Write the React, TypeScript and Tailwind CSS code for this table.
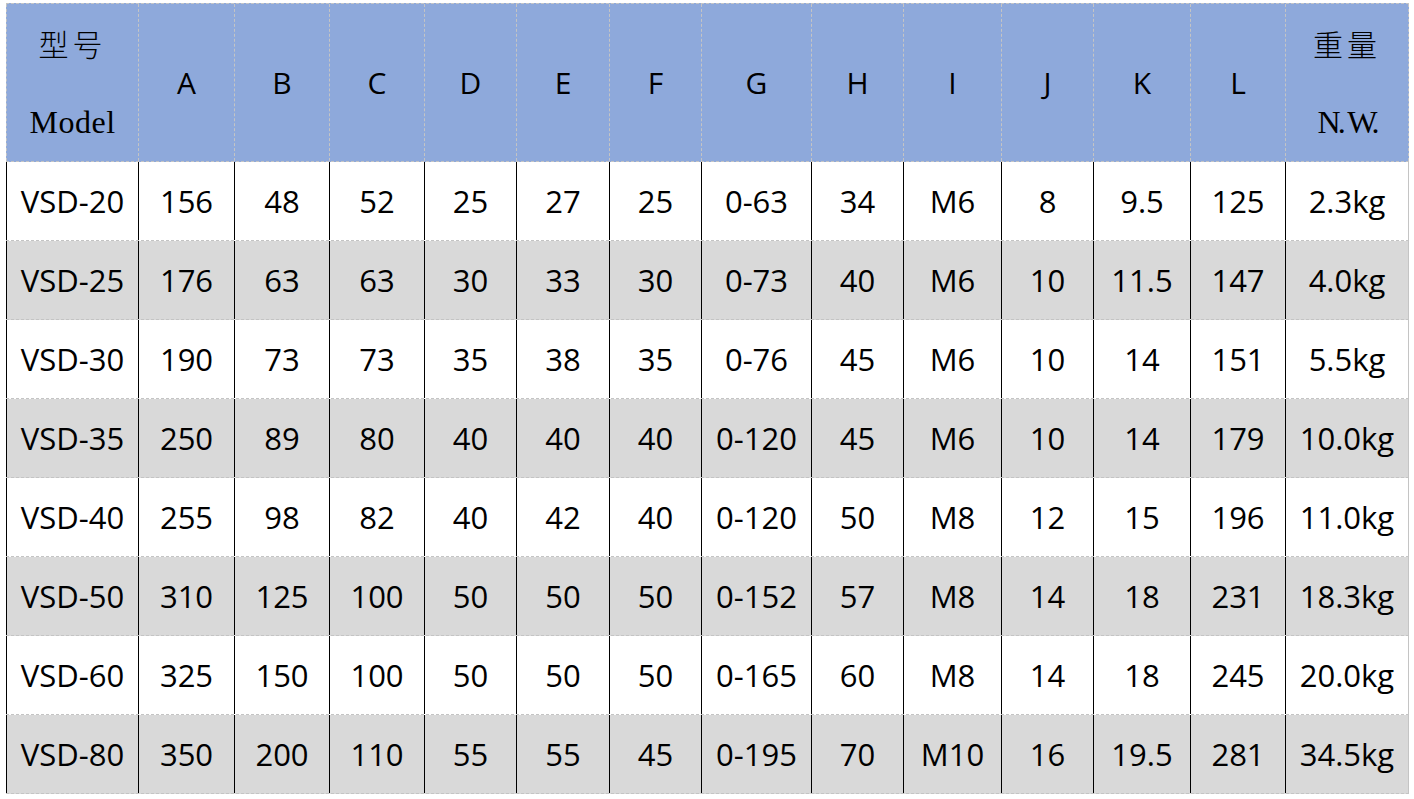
const cols = [
  "A", "B", "C", "D", "E", "F", "G", "H", "I", "J", "K", "L",
];

const rows: string[][] = [
  ["VSD-20", "156", "48", "52", "25", "27", "25", "0-63", "34", "M6", "8", "9.5", "125", "2.3kg"],
  ["VSD-25", "176", "63", "63", "30", "33", "30", "0-73", "40", "M6", "10", "11.5", "147", "4.0kg"],
  ["VSD-30", "190", "73", "73", "35", "38", "35", "0-76", "45", "M6", "10", "14", "151", "5.5kg"],
  ["VSD-35", "250", "89", "80", "40", "40", "40", "0-120", "45", "M6", "10", "14", "179", "10.0kg"],
  ["VSD-40", "255", "98", "82", "40", "42", "40", "0-120", "50", "M8", "12", "15", "196", "11.0kg"],
  ["VSD-50", "310", "125", "100", "50", "50", "50", "0-152", "57", "M8", "14", "18", "231", "18.3kg"],
  ["VSD-60", "325", "150", "100", "50", "50", "50", "0-165", "60", "M8", "14", "18", "245", "20.0kg"],
  ["VSD-80", "350", "200", "110", "55", "55", "45", "0-195", "70", "M10", "16", "19.5", "281", "34.5kg"],
];

const grid =
  "grid w-[1403px] grid-cols-[132px_96px_95px_95px_92px_93px_92px_110px_92px_98px_92px_97px_95px_124px]";

const sans = "font-['Open_Sans',sans-serif]";
const cjk = "font-['Noto_Sans_CJK_SC',serif]";
const serif = "font-['Liberation_Serif',serif]";

export default function App() {
  return (
    <div className="w-[1414px] h-[799px] bg-white pl-[6px] pt-[3px] text-black">
      <div className={`${grid} h-[159px] bg-[#8EA9DB] border-t border-b border-dashed border-[#c4c4c4]`}>
        <div className="flex flex-col border-l border-dashed border-[#c4c4c4]">
          <div className={`h-[79px] flex items-center justify-center text-[30px] tracking-[4px] ${cjk} font-light`}>型号</div>
          <div className={`flex-1 flex items-center justify-center text-[32px] tracking-[0.5px] ${serif}`}>Model</div>
        </div>
        {cols.map((c) => (
          <div
            key={c}
            className={`flex items-center justify-center text-[30px] ${sans} border-l border-dashed border-[#c4c4c4]`}
          >
            {c}
          </div>
        ))}
        <div className="flex flex-col border-l border-r border-dashed border-[#c4c4c4]">
          <div className={`h-[79px] flex items-center justify-center text-[30px] tracking-[4px] ${cjk} font-light`}>重量</div>
          <div className={`flex-1 flex items-center justify-center text-[32px] tracking-[-3px] ${serif}`}>N. W.</div>
        </div>
      </div>

      {rows.map((r, i) => (
        <div
          key={r[0]}
          className={`${grid} h-[79px] border-b border-dashed border-[#c4c4c4] ${i % 2 === 1 ? "bg-[#D9D9D9]" : "bg-white"}`}
        >
          {r.map((v, j) => (
            <div
              key={j}
              className={`flex items-center justify-center text-[31px] ${sans} border-l border-solid border-l-black ${j === r.length - 1 ? "border-r border-r-[#c4c4c4] border-dashed" : ""}`}
            >
              {v}
            </div>
          ))}
        </div>
      ))}
    </div>
  );
}
